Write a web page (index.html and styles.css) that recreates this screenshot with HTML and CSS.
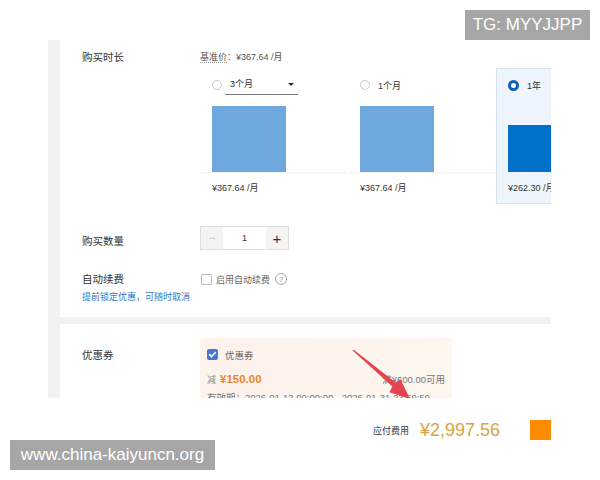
FILE: index.html
```html
<!DOCTYPE html>
<html lang="zh-CN">
<head>
<meta charset="utf-8">
<title>购买</title>
<link rel="stylesheet" href="styles.css">
</head>
<body>
<div class="page">
  <div class="shot">
    <section class="card card-buy">
      <div class="row">
        <div class="label">购买时长</div>
        <div class="value">
          <div class="base-price"><span class="dotted">基准价</span>：¥367.64 /月</div>
          <div class="options">
            <div class="option">
              <div class="opt-head"><span class="radio"></span><span class="select"><span>3个月</span><span class="caret"></span></span></div>
              <div class="chart"><div class="bar bar-light" style="height:66px"></div></div>
              <div class="price">¥367.64 /月</div>
            </div>
            <div class="option">
              <div class="opt-head"><span class="radio"></span><span>1个月</span></div>
              <div class="chart"><div class="bar bar-light" style="height:66px"></div></div>
              <div class="price">¥367.64 /月</div>
            </div>
            <div class="option selected">
              <div class="opt-head"><span class="radio on"></span><span>1年</span></div>
              <div class="chart"><div class="bar bar-dark" style="height:47px"></div></div>
              <div class="price">¥262.30 /月</div>
            </div>
          </div>
        </div>
      </div>
      <div class="row row-qty">
        <div class="label label-qty">购买数量</div>
        <div class="value">
          <div class="stepper">
            <span class="step-btn minus">−</span>
            <span class="step-val">1</span>
            <span class="step-btn plus">+</span>
          </div>
        </div>
      </div>
      <div class="row row-renew">
        <div class="label">自动续费</div>
        <div class="value renew">
          <span class="checkbox"></span>
          <span class="renew-text">启用自动续费</span>
          <span class="help">?</span>
        </div>
      </div>
      <div class="renew-note">提前锁定优惠，可随时取消</div>
    </section>
    <section class="card card-coupon">
      <div class="row">
        <div class="label label-coupon">优惠券</div>
        <div class="value">
          <div class="coupon">
            <div class="coupon-head">
              <span class="checkbox checked"><svg viewBox="0 0 11 11" width="11" height="11"><path d="M2.6 5.6 L4.6 7.6 L8.4 3.6" fill="none" stroke="#fff" stroke-width="1.5" stroke-linecap="round" stroke-linejoin="round"/></svg></span>
              <span class="coupon-title">优惠券</span>
            </div>
            <div class="coupon-amount">
              <span><span class="minus-word">减</span><span class="coupon-off">¥150.00</span></span>
              <span class="coupon-cond">满¥600.00可用</span>
            </div>
            <div class="coupon-valid">有效期：2026-01-12 00:00:00 - 2026-01-31 23:59:59</div>
          </div>
        </div>
      </div>
    </section>
  </div>
  <div class="footer">
    <span class="pay-label">应付费用</span>
    <span class="pay-price">¥2,997.56</span>
    <span class="pay-btn"></span>
  </div>
  <svg class="arrow" width="600" height="398" viewBox="0 0 600 398">
    <polygon points="353.4,349.5 395.6,382.4 400.6,379.4 410,399 389.4,392.2 392.4,386.4 352.6,350.5" fill="#e4434f"/>
  </svg>
  <div class="wm wm-tg">TG: MYYJJPP</div>
  <div class="wm wm-site">www.china-kaiyuncn.org</div>
</div>
</body>
</html>
```
FILE: styles.css
```css
* { box-sizing: border-box; }
html, body { margin: 0; padding: 0; }
body {
  width: 600px;
  height: 480px;
  background: #fff;
  font-family: "Liberation Sans", "Noto Sans CJK SC", sans-serif;
  color: #333;
  overflow: hidden;
}
.page {
  position: relative;
  width: 600px;
  height: 480px;
  padding-top: 40px;
}
.shot {
  margin-left: 48px;
  width: 503px;
  height: 358px;
  padding-left: 12px;
  background: #f1f2f4;
  overflow: hidden;
  display: flex;
  flex-direction: column;
}
.card {
  background: #fff;
  padding-left: 22px;
  overflow: hidden;
}
.card-buy {
  height: 277px;
  padding-top: 10px;
  flex-shrink: 0;
}
.card-coupon {
  margin-top: 7px;
  flex: 1;
  padding-top: 14px;
}
.row {
  display: flex;
  align-items: flex-start;
}
.label {
  width: 118px;
  flex-shrink: 0;
  font-size: 10.5px;
  line-height: 14px;
  color: #333;
}
.value {
  flex: 1;
  min-width: 0;
}
.base-price {
  font-size: 9px;
  line-height: 14px;
  color: #555;
}
.dotted {
  border-bottom: 1px dotted #999;
}
.options {
  display: flex;
  margin-top: 4px;
}
.option {
  width: 148px;
  flex-shrink: 0;
  border: 1px solid transparent;
  padding: 9px 11px 8px;
}
.option.selected {
  background: #eef5fc;
  border-color: #d6e2ee;
}
.opt-head {
  display: flex;
  align-items: center;
  gap: 8px;
  height: 14px;
  font-size: 9px;
  color: #333;
}
.radio {
  width: 10px;
  height: 10px;
  border-radius: 50%;
  border: 1px solid #c9c9c9;
  background: #fff;
  flex-shrink: 0;
}
.radio.on {
  width: 11px;
  height: 11px;
  border: 3.5px solid #0d5fb6;
}
.select {
  display: flex;
  align-items: flex-start;
  justify-content: space-between;
  width: 73px;
  height: 17px;
  margin: 3px 0 0 -5px;
  padding: 0 4px 0 5px;
  line-height: 12px;
  border-bottom: 1px solid #777;
}
.caret {
  width: 0;
  height: 0;
  margin-top: 5px;
  border-left: 3px solid transparent;
  border-right: 3px solid transparent;
  border-top: 3.5px solid #333;
}
.chart {
  height: 81px;
  margin: 0 -11px;
  padding: 0 11px;
  display: flex;
  align-items: flex-end;
  border-bottom: 1px solid #f1f1f1;
}
.option.selected .chart {
  border-bottom-color: transparent;
}
.bar {
  width: 74px;
  flex-shrink: 0;
}
.bar-light { background: #6fa8dc; }
.bar-dark { background: #0070c8; }
.price {
  margin-top: 8px;
  font-size: 9px;
  line-height: 14px;
  color: #333;
}
.row-qty {
  margin-top: 22px;
}
.label-qty {
  margin-top: 8px;
}
.stepper {
  display: flex;
  width: 89px;
  height: 24px;
  border: 1px solid #dedede;
}
.step-btn {
  width: 22px;
  background: #f4f4f4;
  display: flex;
  align-items: center;
  justify-content: center;
}
.minus {
  font-size: 12px;
  color: #c0c0c0;
}
.plus {
  font-size: 15px;
  color: #333;
}
.step-val {
  flex: 1;
  display: flex;
  align-items: center;
  justify-content: center;
  font-size: 9px;
  color: #333;
}
.row-renew {
  margin-top: 22px;
}
.renew {
  display: flex;
  align-items: center;
  height: 14px;
}
.checkbox {
  width: 11px;
  height: 11px;
  margin-left: 1px;
  border: 1px solid #bbb;
  border-radius: 1px;
  background: #fff;
  flex-shrink: 0;
}
.renew-text {
  margin-left: 4px;
  font-size: 9px;
  color: #666;
}
.help {
  width: 12px;
  height: 12px;
  margin-left: 5px;
  border: 1px solid #aaa;
  border-radius: 50%;
  display: flex;
  align-items: center;
  justify-content: center;
  font-size: 8px;
  color: #999;
}
.renew-note {
  margin-top: 5px;
  font-size: 9px;
  line-height: 12px;
  color: #2d7ac9;
}
.label-coupon {
  margin-top: 10px;
}
.coupon {
  width: 252px;
  height: 80px;
  padding: 10px 7px 0;
  border-radius: 4px;
  background: linear-gradient(90deg, #fdf2ec, #fdf7f0);
}
.coupon-head {
  display: flex;
  align-items: center;
  height: 13px;
}
.checkbox.checked {
  margin-left: 0;
  border: none;
  border-radius: 2px;
  background: #4a77d4;
  display: flex;
}
.coupon-title {
  margin-left: 7px;
  font-size: 9.5px;
  color: #666;
}
.coupon-amount {
  margin-top: 10px;
  display: flex;
  justify-content: space-between;
  align-items: baseline;
  line-height: 14px;
}
.minus-word {
  font-size: 9px;
  color: #888;
}
.coupon-off {
  margin-left: 4px;
  font-size: 11.5px;
  font-weight: bold;
  color: #e8892b;
}
.coupon-cond {
  font-size: 9.5px;
  color: #777;
}
.coupon-valid {
  margin-top: 4px;
  font-size: 9.5px;
  line-height: 14px;
  color: #777;
  white-space: nowrap;
}
.footer {
  margin: 22px 0 0 48px;
  width: 503px;
  height: 20px;
  display: flex;
  justify-content: flex-end;
  align-items: center;
}
.pay-label {
  font-size: 9px;
  color: #333;
  margin-right: 11px;
}
.pay-price {
  font-size: 18px;
  color: #d8a445;
  margin-right: 30px;
}
.pay-btn {
  width: 21px;
  height: 20px;
  background: #ff8c00;
}
.arrow {
  position: absolute;
  left: 0;
  top: 0;
}
.wm {
  position: absolute;
  height: 30px;
  background: #a6a6a6;
  color: #fff;
  font-family: "Liberation Sans", sans-serif;
  font-size: 17px;
  display: flex;
  align-items: center;
  justify-content: center;
}
.wm-tg {
  left: 465px;
  top: 10px;
  width: 125px;
}
.wm-site {
  left: 10px;
  top: 440px;
  width: 205px;
}
```
